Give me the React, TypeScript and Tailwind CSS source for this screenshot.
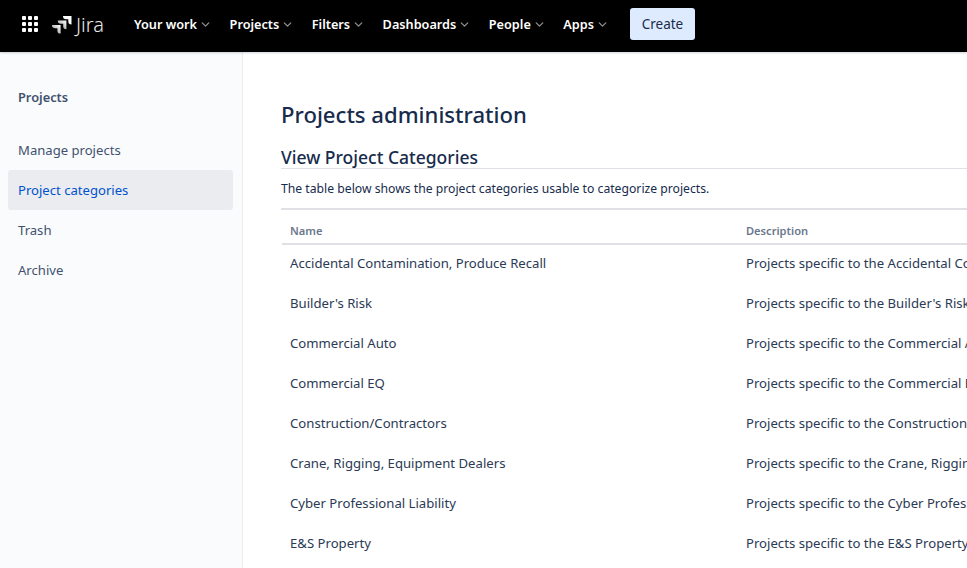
import { ChevronDown } from "lucide-react";

const navItems = ["Your work", "Projects", "Filters", "Dashboards", "People", "Apps"];
const sideItems = ["Manage projects", "Project categories", "Trash", "Archive"];
const rows = [
  ["Accidental Contamination, Produce Recall", "Projects specific to the Accidental Contamination, Produce Recall"],
  ["Builder's Risk", "Projects specific to the Builder's Risk category"],
  ["Commercial Auto", "Projects specific to the Commercial Auto category"],
  ["Commercial EQ", "Projects specific to the Commercial EQ category"],
  ["Construction/Contractors", "Projects specific to the Construction/Contractors"],
  ["Crane, Rigging, Equipment Dealers", "Projects specific to the Crane, Rigging, Equipment Dealers"],
  ["Cyber Professional Liability", "Projects specific to the Cyber Professional Liability"],
  ["E&S Property", "Projects specific to the E&S Property category"],
];

function GridIcon() {
  return (
    <div className="grid w-[16px] grid-cols-3 gap-[2px]">
      {Array.from({ length: 9 }).map((_, i) => (
        <div key={i} className="h-[4px] w-[4px] rounded-[1px] bg-white" />
      ))}
    </div>
  );
}

function JiraMark() {
  return (
    <svg width="21" height="19" viewBox="0 0 21 19">
      <defs>
        <linearGradient id="fade" x1="1" y1="0" x2="0" y2="1">
          <stop offset="0" stopColor="#fff" />
          <stop offset="1" stopColor="#8a8a8a" />
        </linearGradient>
      </defs>
      <path d="M12 1h8.5v8.5a3.2 3.2 0 0 1-3.2-3.2V4.2h-2.1A3.2 3.2 0 0 1 12 1z" fill="#fff" />
      <path d="M6.8 5.6h8.6v8.6a3.2 3.2 0 0 1-3.2-3.2V8.8h-2.2a3.2 3.2 0 0 1-3.2-3.2z" fill="url(#fade)" />
      <path d="M1 10h8.6v8.6a3.2 3.2 0 0 1-3.2-3.2v-2.2H4.2A3.2 3.2 0 0 1 1 10z" fill="url(#fade)" />
    </svg>
  );
}

export default function App() {
  return (
    <div className="flex h-[568px] w-[967px] flex-col overflow-hidden bg-white font-['Noto_Sans',sans-serif]">
      <header className="z-10 flex h-[52px] shrink-0 items-center bg-black pb-[4px] pl-[22px] shadow-[0_1px_2px_rgba(9,30,66,0.2)]">
        <GridIcon />
        <div className="ml-[13px] flex w-[54px] items-center gap-[4px]">
          <JiraMark />
          <span className="pt-[1px] text-[20px] font-light leading-none text-[#e8e8e8]">Jira</span>
        </div>
        <nav className="ml-[29px] flex items-center gap-[17.5px] pt-[1px]">
          {navItems.map((item) => (
            <div key={item} className="flex items-center text-[12.7px] font-semibold text-white">
              {item}
              <ChevronDown className="ml-[2px] h-[13px] w-[13px] text-[#8c8c8c]" strokeWidth={2.5} />
            </div>
          ))}
        </nav>
        <button className="ml-[21px] h-[32px] w-[65px] rounded-[3px] bg-[#deebff] pt-[1px] text-[13.5px] text-[#172b4d]">
          Create
        </button>
      </header>
      <div className="flex min-h-0 flex-1">
        <aside className="w-[243px] shrink-0 border-r border-[#ebecf0] bg-[#fafbfc] pl-[8px] pr-[9px] pt-[36px]">
          <div className="px-[10px] text-[12.8px] font-semibold text-[#42526e]">Projects</div>
          <div className="mt-[23px]">
            {sideItems.map((item) => (
              <div
                key={item}
                className={
                  item === "Project categories"
                    ? "flex h-[40px] items-center rounded-[3px] bg-[#ebecf0] px-[10px] pt-[1px] text-[13.1px] text-[#0052cc]"
                    : "flex h-[40px] items-center px-[10px] pt-[1px] text-[13.1px] text-[#42526e]"
                }
              >
                {item}
              </div>
            ))}
          </div>
        </aside>
        <main className="min-w-0 flex-1 overflow-hidden pl-[38px] pt-[46px]">
          <h1 className="text-[22.1px] font-medium leading-[32px] text-[#172b4d]">Projects administration</h1>
          <h2 className="mt-[14px] h-[25px] border-b border-[#dfe1e6] text-[17.5px] font-medium leading-[26px] text-[#172b4d]">
            View Project Categories
          </h2>
          <p className="mt-[11px] text-[12.2px] leading-[18px] text-[#172b4d]">
            The table below shows the project categories usable to categorize projects.
          </p>
          <div className="mt-[10px] w-[1000px] border-t-2 border-[#dfe1e6] pl-[1px]">
            <div className="flex h-[35px] items-end border-b-2 border-[#dfe1e6] pb-[3px] text-[11.1px] font-semibold text-[#6b778c]">
              <div className="w-[464px] shrink-0 pl-[8px]">Name</div>
              <div>Description</div>
            </div>
            {rows.map(([name, desc]) => (
              <div key={name} className="flex h-[40px] items-center pb-[2px] text-[13.15px] text-[#2b3a55]">
                <div className="w-[464px] shrink-0 pl-[8px]">{name}</div>
                <div className="whitespace-nowrap">{desc}</div>
              </div>
            ))}
          </div>
        </main>
      </div>
    </div>
  );
}
